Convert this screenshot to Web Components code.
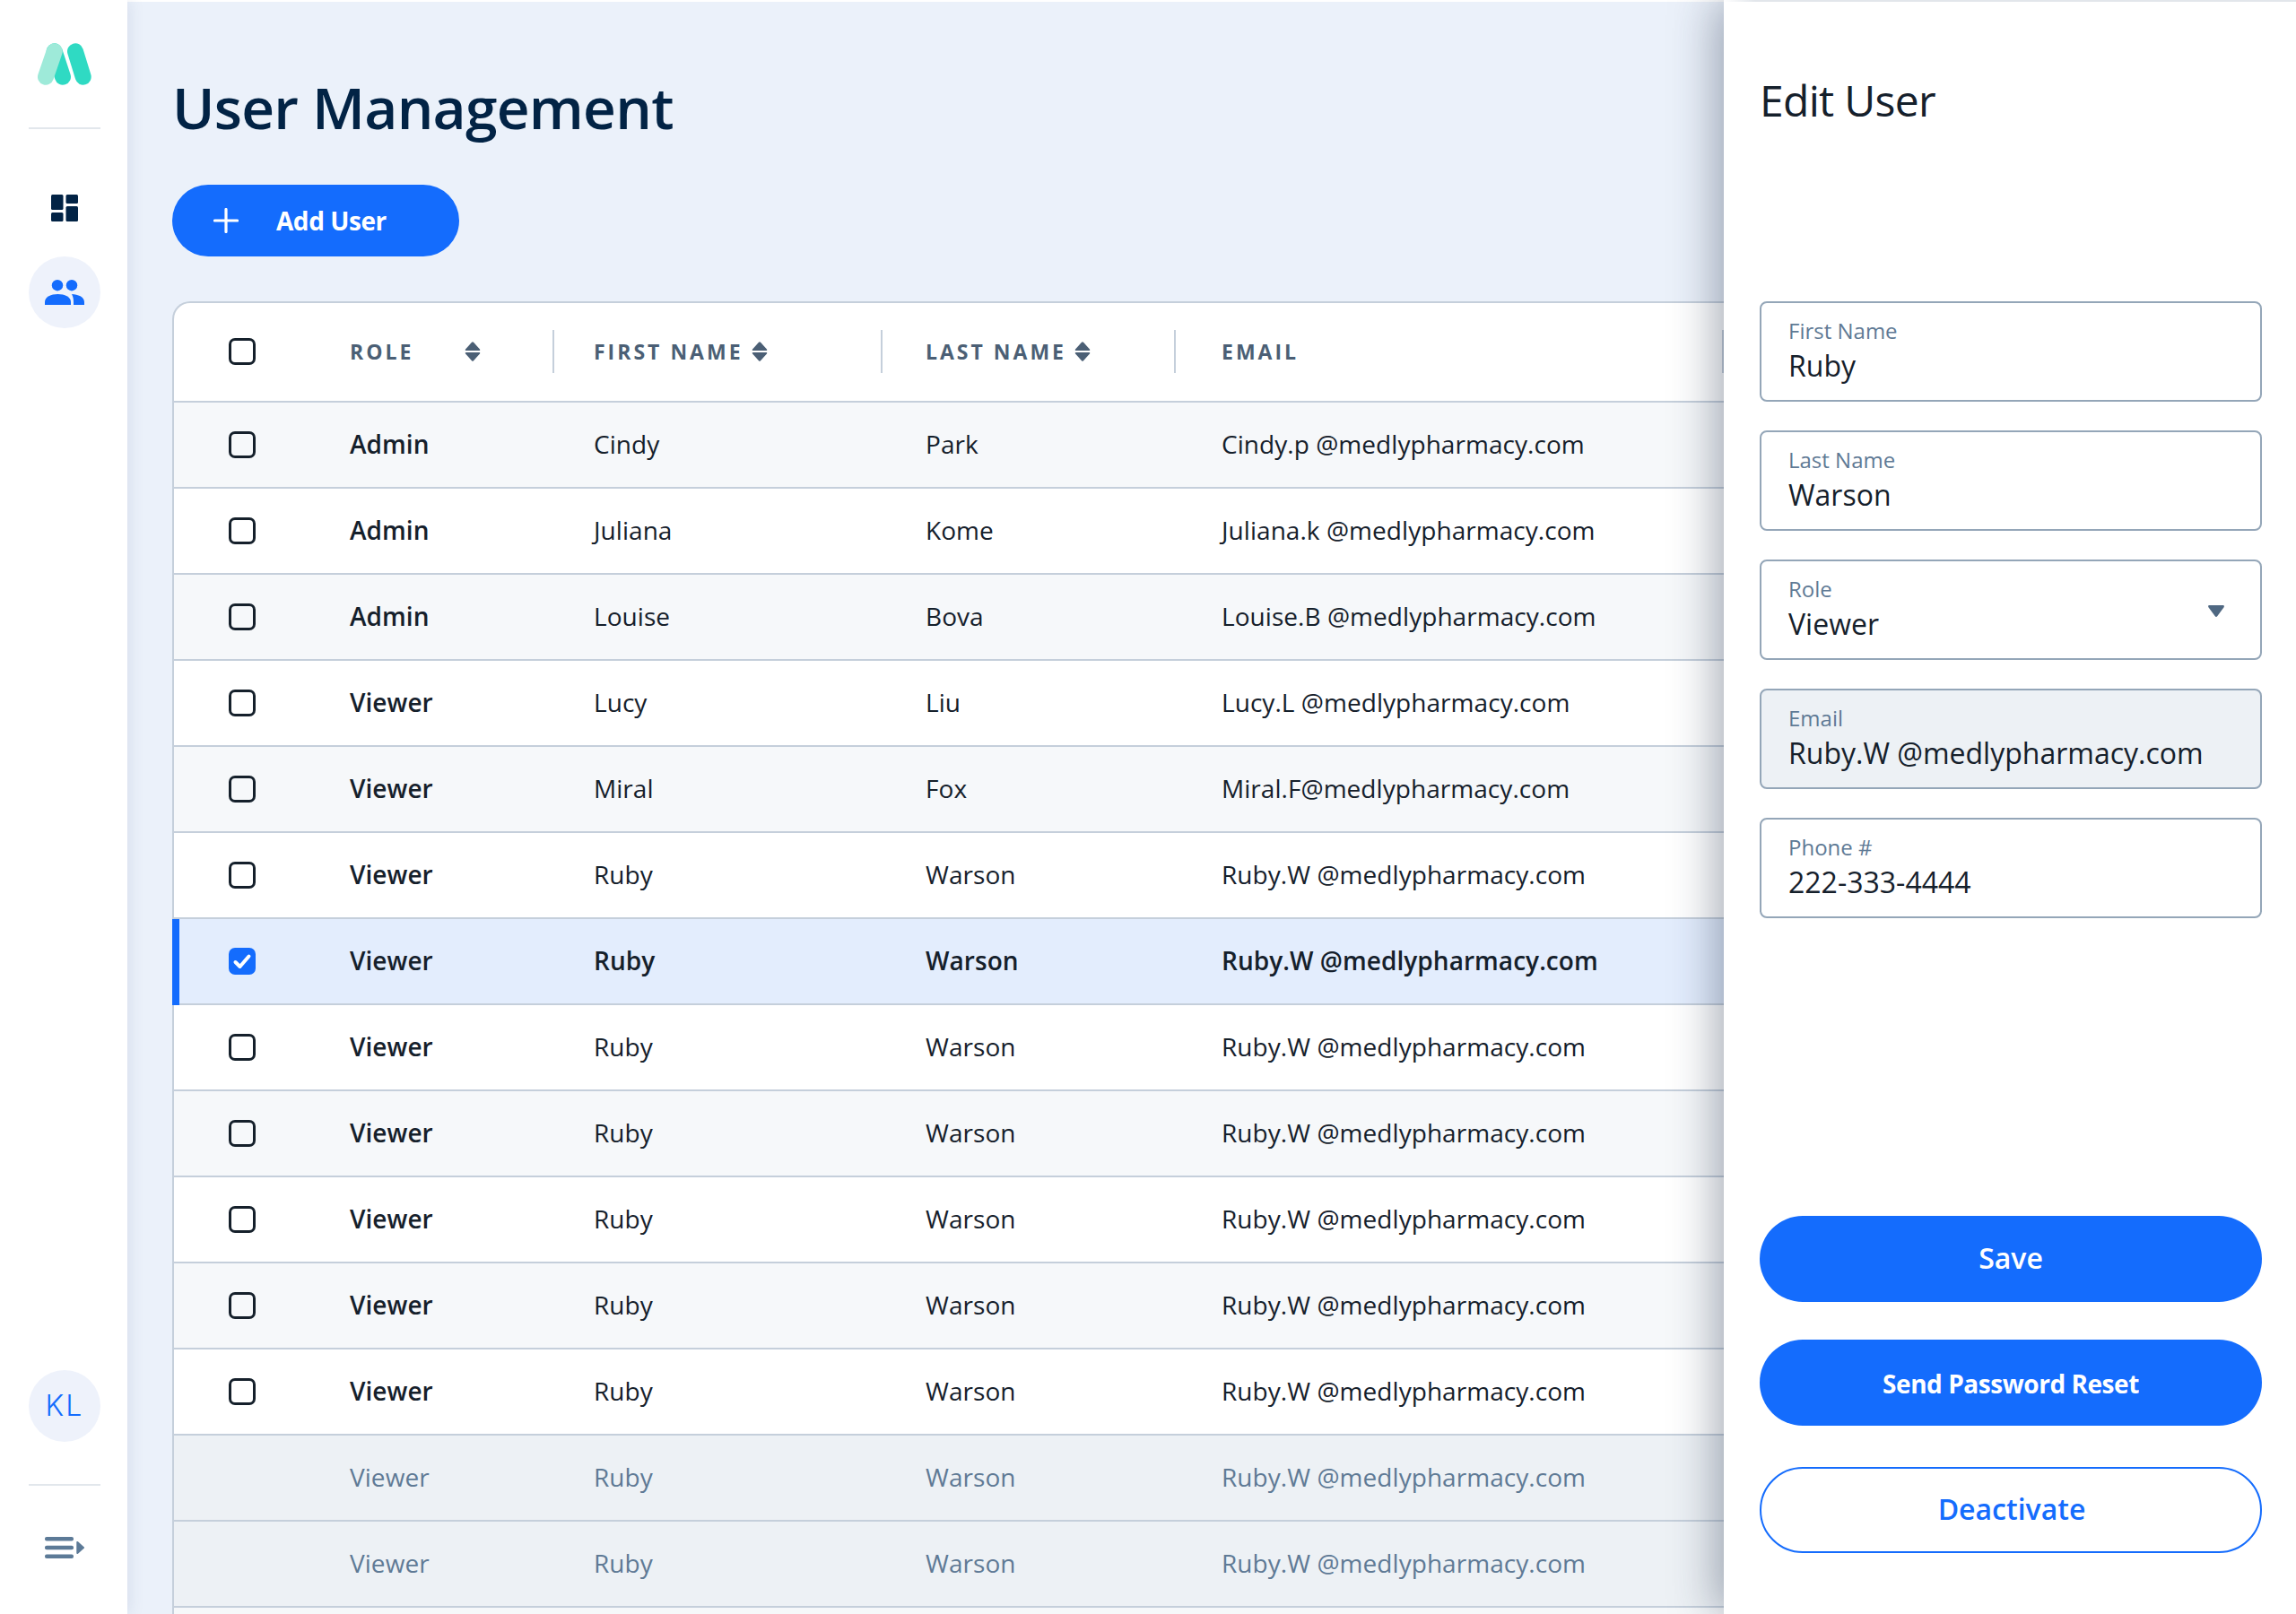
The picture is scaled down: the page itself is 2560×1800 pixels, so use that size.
<!DOCTYPE html>
<html>
<head>
<meta charset="utf-8">
<title>User Management</title>
<style>
    html, body {
        margin: 0;
        height: 1800px;
        overflow: hidden;
        font-family: "Open Sans", "Noto Sans", sans-serif;
        color: #15202b;
    }
    body {
        display: flex;
    }
</style>
</head>
<body>
    <side-nav></side-nav>

    <user-page heading="User Management">
        <user-table>
            <user-row><span>Admin</span><span>Cindy</span><span>Park</span><span>Cindy.p @medlypharmacy.com</span></user-row>
            <user-row><span>Admin</span><span>Juliana</span><span>Kome</span><span>Juliana.k @medlypharmacy.com</span></user-row>
            <user-row><span>Admin</span><span>Louise</span><span>Bova</span><span>Louise.B @medlypharmacy.com</span></user-row>
            <user-row><span>Viewer</span><span>Lucy</span><span>Liu</span><span>Lucy.L @medlypharmacy.com</span></user-row>
            <user-row><span>Viewer</span><span>Miral</span><span>Fox</span><span>Miral.F@medlypharmacy.com</span></user-row>
            <user-row><span>Viewer</span><span>Ruby</span><span>Warson</span><span>Ruby.W @medlypharmacy.com</span></user-row>
            <user-row selected><span>Viewer</span><span>Ruby</span><span>Warson</span><span>Ruby.W @medlypharmacy.com</span></user-row>
            <user-row><span>Viewer</span><span>Ruby</span><span>Warson</span><span>Ruby.W @medlypharmacy.com</span></user-row>
            <user-row><span>Viewer</span><span>Ruby</span><span>Warson</span><span>Ruby.W @medlypharmacy.com</span></user-row>
            <user-row><span>Viewer</span><span>Ruby</span><span>Warson</span><span>Ruby.W @medlypharmacy.com</span></user-row>
            <user-row><span>Viewer</span><span>Ruby</span><span>Warson</span><span>Ruby.W @medlypharmacy.com</span></user-row>
            <user-row><span>Viewer</span><span>Ruby</span><span>Warson</span><span>Ruby.W @medlypharmacy.com</span></user-row>
            <user-row disabled><span>Viewer</span><span>Ruby</span><span>Warson</span><span>Ruby.W @medlypharmacy.com</span></user-row>
            <user-row disabled><span>Viewer</span><span>Ruby</span><span>Warson</span><span>Ruby.W @medlypharmacy.com</span></user-row>
            <!-- next row only peeks in at the bottom edge -->
            <user-row disabled style="background: #f6f8fa"></user-row>
        </user-table>
    </user-page>

    <edit-panel heading="Edit User">
        <text-field label="First Name" value="Ruby"></text-field>
        <text-field label="Last Name" value="Warson"></text-field>
        <text-field label="Role" value="Viewer" select></text-field>
        <text-field label="Email" value="Ruby.W @medlypharmacy.com" disabled></text-field>
        <text-field label="Phone #" value="222-333-4444"></text-field>

        <pill-button slot="actions" size="32" style="padding-bottom: 3px">Save</pill-button>
        <pill-button slot="actions" size="28" style="margin-top: 42px; padding-top: 2px; font-weight: 700; letter-spacing: -.45px">Send Password Reset</pill-button>
        <pill-button slot="actions" size="32" outline style="margin-top: 46px; padding: 0 0 3px 2px">Deactivate</pill-button>
    </edit-panel>

<script>
    class SideNav extends HTMLElement {
        connectedCallback() {
            this.attachShadow({ mode: "open" }).innerHTML = `
            <style>
                :host {
                    display: flex;
                    flex-direction: column;
                    align-items: center;
                    flex: none;
                    position: relative;
                    z-index: 1;
                    width: 142px;
                    height: 1800px;
                    box-sizing: border-box;
                    padding: 48px 0 62px 2px;
                    background: #fff;
                    box-shadow: 0 0 18px rgba(50, 70, 130, .14);
                }
                hr {
                    width: 80px;
                    height: 2px;
                    margin: 0;
                    border: 0;
                    background: #e2e7ec;
                }
                svg { display: block; flex: none; }
                .circle {
                    display: flex;
                    align-items: center;
                    justify-content: center;
                    width: 80px;
                    height: 80px;
                    border-radius: 50%;
                    background: #eef2fb;
                }
                .initials {
                    box-sizing: border-box;
                    padding-bottom: 2px;
                    font: 300 32px Inter, sans-serif;
                    letter-spacing: 2px;
                    color: #146cfd;
                    margin-top: auto;
                }
            </style>
            <svg width="60" height="48" viewBox="0 0 60 48" fill="none" stroke-width="18" stroke-linecap="round">
                <path d="M18.7 9.3 28 37.7" stroke="#2fdac3"/>
                <path d="M18.7 9.3 9 37.7" stroke="#9eead9"/>
                <path d="M42 9.3 50.7 37.7" stroke="#2fdac3"/>
            </svg>
            <hr style="margin-top: 46px">
            <svg style="margin-top: 73px" width="30" height="30" viewBox="0 0 30 30" fill="#022345">
                <rect x="0" y="0" width="13.5" height="17" rx="1.5"/>
                <rect x="0" y="20" width="13.5" height="10" rx="1.5"/>
                <rect x="16.5" y="0" width="13.5" height="10" rx="1.5"/>
                <rect x="16.5" y="13" width="13.5" height="17" rx="1.5"/>
            </svg>
            <div class="circle" style="margin-top: 39px">
                <svg width="44" height="28" viewBox="0 0 44 28" fill="#146cfd">
                    <circle cx="14" cy="6.2" r="6.2"/>
                    <circle cx="30" cy="6.2" r="6.2"/>
                    <path d="M0 28v-3.2C0 19.200 7 16 14.500 16S29 19.200 29 24.800V28Z"/>
                    <path d="M30 16c7 .2 14 3.200 14 8.800V28H32v-3.200c0-3.500-.6-6.200-2-8.800Z"/>
                </svg>
            </div>
            <div class="circle initials">KL</div>
            <hr style="margin-top: 47px">
            <svg style="margin-top: 57px" width="44" height="24" viewBox="0 0 44 24" fill="#5c7a97">
                <rect x="0" y="0" width="32" height="4.400" rx="2"/>
                <rect x="0" y="9.800" width="32" height="4.400" rx="2"/>
                <rect x="0" y="19.600" width="32" height="4.400" rx="2"/>
                <path d="M35.300 6a1 1 0 0 1 1.700-.8l6.600 6a1 1 0 0 1 0 1.600l-6.600 6a1 1 0 0 1-1.700-.8Z"/>
            </svg>
            `;
        }
    }

    class UserPage extends HTMLElement {
        connectedCallback() {
            this.attachShadow({ mode: "open" }).innerHTML = `
            <style>
                :host {
                    display: block;
                    flex: 1;
                    min-width: 0;
                    height: 1800px;
                    box-sizing: border-box;
                    overflow: hidden;
                    padding: 74px 0 0 50px;
                    border-top: 2px solid #fff;
                    background: #ebf1fa;
                }
                h1 {
                    margin: 0;
                    font-size: 64px;
                    line-height: 88px;
                    font-weight: 600;
                    letter-spacing: -.75px;
                    color: #022345;
                }
                .add {
                    display: flex;
                    align-items: center;
                    width: 320px;
                    height: 80px;
                    box-sizing: border-box;
                    margin: 42px 0 50px;
                    padding-left: 46px;
                    border-radius: 40px;
                    background: #146cfd;
                    color: #fff;
                    font-size: 28px;
                    font-weight: 700;
                    letter-spacing: -.45px;
                }
                .add svg { margin-right: 42px; }
            </style>
            <h1>${this.getAttribute("heading")}</h1>
            <div class="add">
                <svg width="28" height="28" viewBox="0 0 28 28" stroke="#fff" stroke-width="3.2" stroke-linecap="round">
                    <path d="M14 1.500v25M1.500 14h25"/>
                </svg>
                Add User
            </div>
            <slot></slot>
            `;
        }
    }

    class UserTable extends HTMLElement {
        connectedCallback() {
            this.attachShadow({ mode: "open" }).innerHTML = `
            <style>
                :host {
                    display: block;
                    border-top: 2px solid #c5cfdb;
                    border-left: 2px solid #c5cfdb;
                    border-top-left-radius: 20px;
                    background: #fff;
                }
                .head {
                    display: grid;
                    grid-template-columns: 196px 226px 366px 327px 613px;
                    align-items: center;
                    height: 111px;
                    box-sizing: border-box;
                    padding-bottom: 2px;
                    border-bottom: 2px solid #c5cfdb;
                }
                check-box { margin-left: 61px; }
            </style>
            <div class="head">
                <check-box></check-box>
                <head-cell sort style="--gap: 57px; border: 0; --pad: 0">ROLE</head-cell>
                <head-cell sort style="--gap: 9px; --pad: 44px">FIRST NAME</head-cell>
                <head-cell sort style="--gap: 9px; --pad: 48px">LAST NAME</head-cell>
                <head-cell style="--pad: 51px; border-right: 2px solid #c5cfdb">EMAIL</head-cell>
            </div>
            <slot></slot>
            `;
        }
    }

    class HeadCell extends HTMLElement {
        connectedCallback() {
            const sort = this.hasAttribute("sort") ? `
                <svg width="18" height="22" viewBox="0 0 18 22" fill="#4b5f75">
                    <path d="M8 .8a1.300 1.300 0 0 1 2 0l7 7.600c.6.800.2 1.600-.8 1.600H1.800C.8 10 .4 9.200 1 8.400Z"/>
                    <path d="M8 21.200a1.300 1.300 0 0 0 2 0l7-7.600c.6-.8.2-1.600-.8-1.600H1.800C.8 12 .4 12.800 1 13.600Z"/>
                </svg>` : "";
            this.attachShadow({ mode: "open" }).innerHTML = `
            <style>
                :host {
                    display: flex;
                    align-items: center;
                    height: 48px;
                    box-sizing: border-box;
                    padding-left: var(--pad);
                    border-left: 2px solid #c5cfdb;
                    font-size: 23px;
                    font-weight: 700;
                    letter-spacing: 3px;
                    color: #4b5f75;
                }
                svg { margin-left: var(--gap); flex: none; }
            </style>
            <slot></slot>${sort}
            `;
        }
    }

    class UserRow extends HTMLElement {
        connectedCallback() {
            const box = this.hasAttribute("disabled") ? "<i></i>" : `<check-box ${this.hasAttribute("selected") ? "checked" : ""}></check-box>`;
            this.attachShadow({ mode: "open" }).innerHTML = `
            <style>
                :host {
                    display: grid;
                    grid-template-columns: 196px 272px 370px 330px 1fr;
                    align-items: center;
                    position: relative;
                    height: 96px;
                    box-sizing: border-box;
                    padding-bottom: 2px;
                    border-bottom: 2px solid #c5cfdb;
                    background: #fff;
                    font-size: 28px;
                    letter-spacing: .05px;
                    white-space: nowrap;
                }
                :host(:nth-of-type(odd)) { background: #f6f8fa; }
                :host([selected]) { background: #e3edfd; }
                :host([selected]) ::slotted(span) { font-weight: 600; }
                :host([selected])::before {
                    content: "";
                    position: absolute;
                    left: -2px;
                    top: 0;
                    bottom: -2px;
                    width: 8px;
                    background: #146cfd;
                }
                :host([disabled]) { background: #edf1f5; color: #5f7a95; }
                ::slotted(span:first-child) { font-weight: 600; }
                :host([disabled]) ::slotted(span:first-child) { font-weight: 400; }
                check-box { margin: 2px 0 0 61px; }
            </style>
            ${box}<slot></slot>
            `;
        }
    }

    class CheckBox extends HTMLElement {
        connectedCallback() {
            const tick = this.hasAttribute("checked") ? `
                <svg width="30" height="30" viewBox="0 0 30 30" fill="none" stroke="#fff" stroke-width="4" stroke-linecap="round" stroke-linejoin="round">
                    <path d="M7.500 16l5 5 10-11.500"/>
                </svg>` : "";
            this.attachShadow({ mode: "open" }).innerHTML = `
            <style>
                :host {
                    display: block;
                    width: 30px;
                    height: 30px;
                    box-sizing: border-box;
                    border: 3px solid #15202b;
                    border-radius: 7px;
                    background: transparent;
                }
                :host([checked]) { border: 0; background: #146cfd; }
                svg { display: block; }
            </style>
            ${tick}
            `;
        }
    }

    class EditPanel extends HTMLElement {
        connectedCallback() {
            this.attachShadow({ mode: "open" }).innerHTML = `
            <style>
                :host {
                    display: flex;
                    flex-direction: column;
                    flex: none;
                    position: relative;
                    z-index: 2;
                    width: 638px;
                    height: 1800px;
                    box-sizing: border-box;
                    padding: 72px 38px 68px 40px;
                    border-top: 2px solid;
                    border-image: linear-gradient(90deg, #fff, #e2e6eb 36px) 1;
                    background: #fff;
                    box-shadow: -8px 0 48px rgba(30, 45, 70, .4);
                }
                h2 {
                    margin: 0 0 186px;
                    font-size: 48px;
                    line-height: 76px;
                    font-weight: 400;
                    letter-spacing: -.7px;
                    color: #15202b;
                }
                .fields {
                    display: flex;
                    flex-direction: column;
                    gap: 32px;
                }
                .actions { margin-top: auto; }
            </style>
            <h2>${this.getAttribute("heading")}</h2>
            <div class="fields"><slot></slot></div>
            <div class="actions"><slot name="actions"></slot></div>
            `;
        }
    }

    class TextField extends HTMLElement {
        connectedCallback() {
            const caret = this.hasAttribute("select") ? `
                <svg width="18" height="13" viewBox="0 0 18 13" fill="#4f6882">
                    <path d="M7.800 12.200a1.400 1.400 0 0 0 2.400 0l7.400-10C18.200 1.200 17.800 0 16.600 0H1.400C.2 0-.2 1.200.4 2.200Z"/>
                </svg>` : "";
            this.attachShadow({ mode: "open" }).innerHTML = `
            <style>
                :host {
                    display: block;
                    position: relative;
                    height: 112px;
                    box-sizing: border-box;
                    padding: 15px 30px 0;
                    border: 2px solid #94a6b8;
                    border-radius: 8px;
                    background: #fff;
                }
                :host([disabled]) { background: #edf1f5; }
                .label {
                    font-size: 24px;
                    line-height: 32px;
                    color: #5f7a95;
                }
                .value {
                    margin-top: 1px;
                    font-size: 32px;
                    line-height: 44px;
                    color: #15202b;
                }
                svg { position: absolute; right: 40px; top: 49px; }
            </style>
            <div class="label">${this.getAttribute("label")}</div>
            <div class="value">${this.getAttribute("value")}</div>
            ${caret}
            `;
        }
    }

    class PillButton extends HTMLElement {
        connectedCallback() {
            this.attachShadow({ mode: "open" }).innerHTML = `
            <style>
                :host {
                    display: flex;
                    align-items: center;
                    justify-content: center;
                    height: 96px;
                    box-sizing: border-box;
                    border-radius: 48px;
                    background: #146cfd;
                    color: #fff;
                    font-size: ${this.getAttribute("size")}px;
                    font-weight: 600;
                }
                :host([outline]) {
                    background: #fff;
                    color: #146cfd;
                    border: 2px solid #146cfd;
                }
            </style>
            <slot></slot>
            `;
        }
    }

    customElements.define("side-nav", SideNav);
    customElements.define("user-page", UserPage);
    customElements.define("user-table", UserTable);
    customElements.define("head-cell", HeadCell);
    customElements.define("user-row", UserRow);
    customElements.define("check-box", CheckBox);
    customElements.define("edit-panel", EditPanel);
    customElements.define("text-field", TextField);
    customElements.define("pill-button", PillButton);
</script>
</body>
</html>
